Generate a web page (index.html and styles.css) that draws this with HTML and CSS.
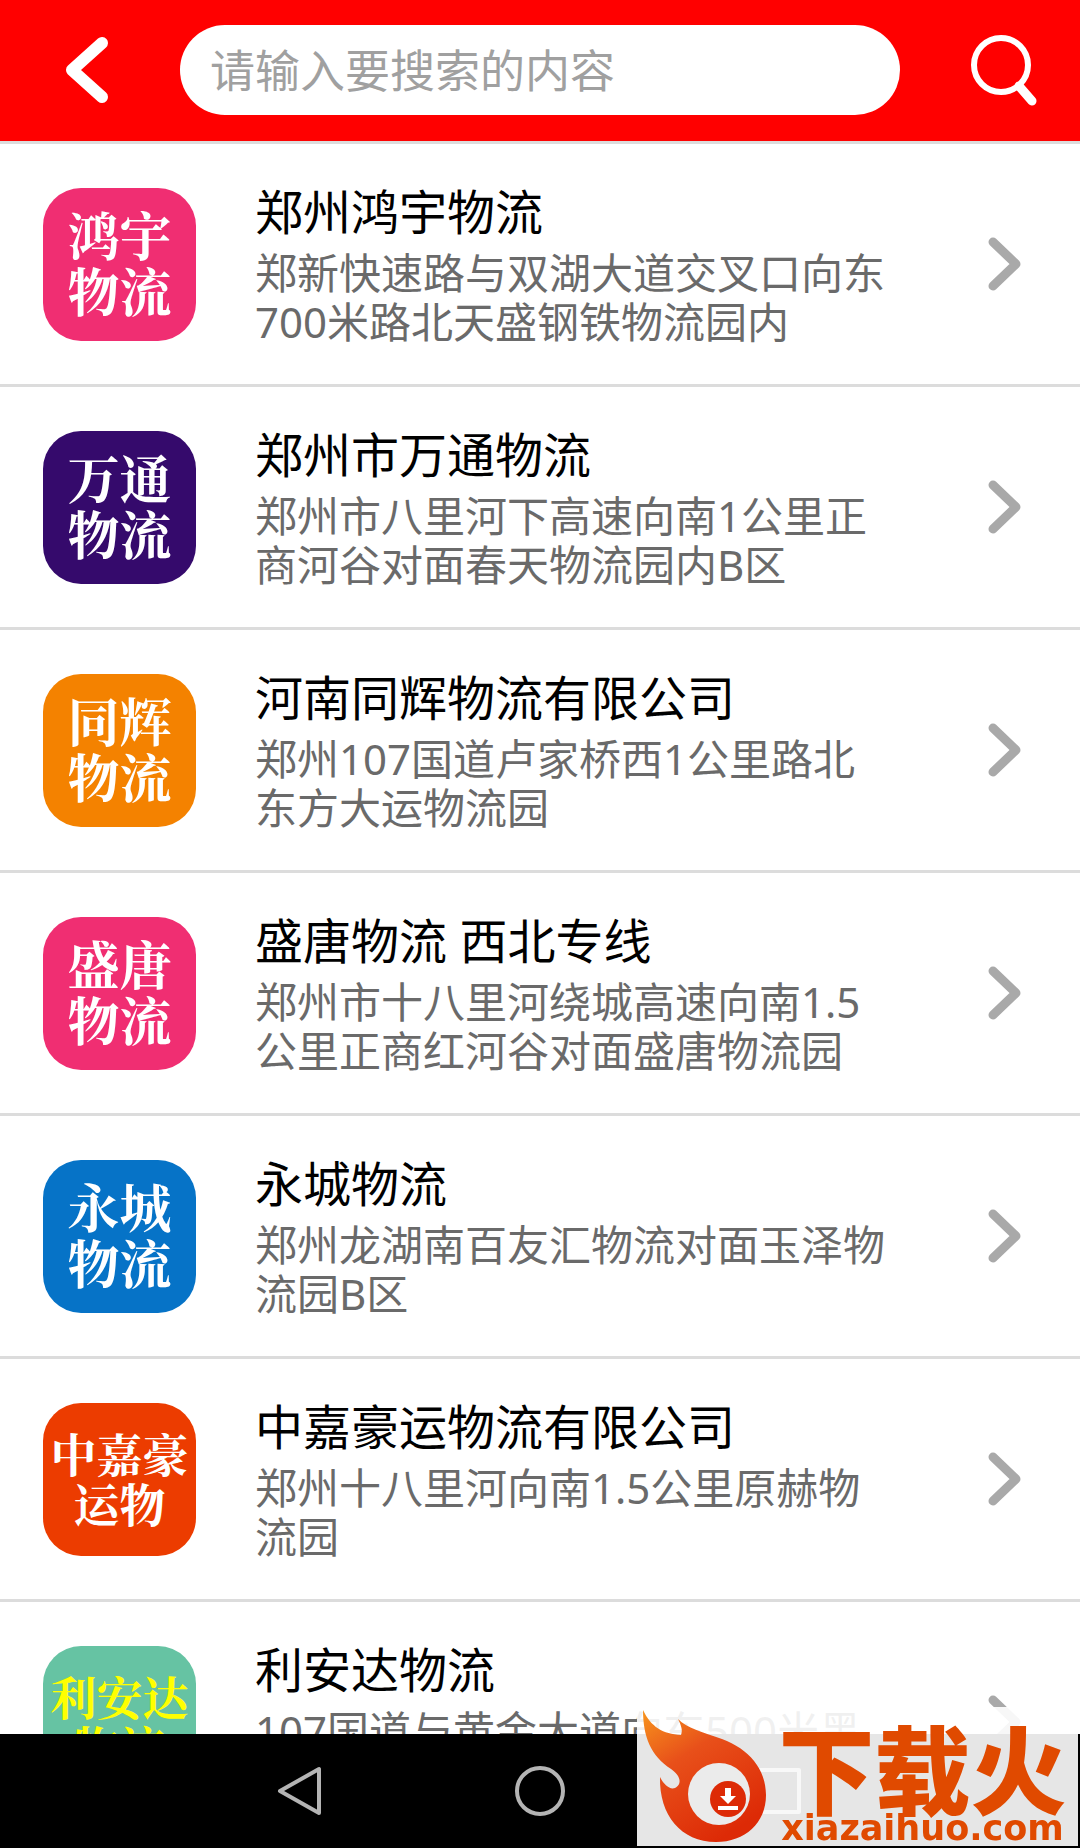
FILE: index.html
```html
<!DOCTYPE html>
<html lang="zh-CN">
<head>
    <meta charset="UTF-8">
    <meta name="viewport" content="width=device-width, initial-scale=1.0">
    <title>物流搜索</title>
    <link rel="stylesheet" href="styles.css">
</head>
<body>
    <form class="header">
        <button type="button" class="back-btn" aria-label="返回">
            <svg width="44" height="68" viewBox="0 0 44 68"><path d="M37 7 L7 34 L37 61"/></svg>
        </button>
        <input type="text" class="search-input" name="keyword" placeholder="请输入要搜索的内容" aria-label="搜索">
        <button type="submit" class="search-btn" aria-label="搜索">
            <svg width="68" height="74" viewBox="0 0 68 74"><circle cx="32" cy="32" r="27"/><path class="handle" d="M50 53 L63 68"/></svg>
        </button>
    </form>

    <main class="list">
        <a href="#" class="item">
            <span class="logo pink">鸿宇<br>物流</span>
            <div class="info">
                <h2>郑州鸿宇物流</h2>
                <p>郑新快速路与双湖大道交叉口向东700米路北天盛钢铁物流园内</p>
            </div>
            <svg class="arrow" width="34" height="54" viewBox="0 0 34 54"><path d="M5 5 L28 27 L5 49"/></svg>
        </a>
        <a href="#" class="item">
            <span class="logo purple">万通<br>物流</span>
            <div class="info">
                <h2>郑州市万通物流</h2>
                <p>郑州市八里河下高速向南1公里正商河谷对面春天物流园内B区</p>
            </div>
            <svg class="arrow" width="34" height="54" viewBox="0 0 34 54"><path d="M5 5 L28 27 L5 49"/></svg>
        </a>
        <a href="#" class="item">
            <span class="logo orange">同辉<br>物流</span>
            <div class="info">
                <h2>河南同辉物流有限公司</h2>
                <p>郑州107国道卢家桥西1公里路北东方大运物流园</p>
            </div>
            <svg class="arrow" width="34" height="54" viewBox="0 0 34 54"><path d="M5 5 L28 27 L5 49"/></svg>
        </a>
        <a href="#" class="item">
            <span class="logo pink">盛唐<br>物流</span>
            <div class="info">
                <h2>盛唐物流 西北专线</h2>
                <p>郑州市十八里河绕城高速向南1.5公里正商红河谷对面盛唐物流园</p>
            </div>
            <svg class="arrow" width="34" height="54" viewBox="0 0 34 54"><path d="M5 5 L28 27 L5 49"/></svg>
        </a>
        <a href="#" class="item">
            <span class="logo blue">永城<br>物流</span>
            <div class="info">
                <h2>永城物流</h2>
                <p>郑州龙湖南百友汇物流对面玉泽物流园B区</p>
            </div>
            <svg class="arrow" width="34" height="54" viewBox="0 0 34 54"><path d="M5 5 L28 27 L5 49"/></svg>
        </a>
        <a href="#" class="item">
            <span class="logo small red">中嘉豪<br>运物</span>
            <div class="info">
                <h2>中嘉豪运物流有限公司</h2>
                <p>郑州十八里河向南1.5公里原赫物流园</p>
            </div>
            <svg class="arrow" width="34" height="54" viewBox="0 0 34 54"><path d="M5 5 L28 27 L5 49"/></svg>
        </a>
        <a href="#" class="item">
            <span class="logo small green">利安达<br>物流</span>
            <div class="info">
                <h2>利安达物流</h2>
                <p>107国道与黄金大道向东500米黑<br>&nbsp;</p>
            </div>
            <svg class="arrow" width="34" height="54" viewBox="0 0 34 54"><path d="M5 5 L28 27 L5 49"/></svg>
        </a>
    </main>

    <nav class="nav">
        <button type="button" aria-label="后退">
            <svg width="52" height="52" viewBox="0 0 52 52"><path d="M45 4 V48 L6 26 Z"/></svg>
        </button>
        <button type="button" aria-label="主页">
            <svg width="52" height="52" viewBox="0 0 52 52"><circle cx="26" cy="26" r="23"/></svg>
        </button>
        <button type="button" aria-label="最近任务">
            <svg width="52" height="52" viewBox="0 0 52 52"><rect x="5" y="5" width="40" height="42"/></svg>
        </button>
    </nav>

    <div class="watermark">
        <svg width="130" height="136" viewBox="0 0 130 136">
            <defs>
                <linearGradient id="fire" x1="0" y1="0" x2="0.6" y2="1">
                    <stop offset="0" stop-color="#f7941d"/>
                    <stop offset="0.4" stop-color="#e8501a"/>
                    <stop offset="1" stop-color="#dd2a06"/>
                </linearGradient>
            </defs>
            <path fill="url(#fire)" d="M6 3 C14 20 26 27 44 28 C46 23 44 18 41 12 C50 21 65 25 85 32 C112 42 129 62 129 88 C129 116 108 135 79 135 C44 135 22 108 23 70 C27 78 33 83 38 81 C46 77 43 68 34 62 C14 49 6 30 6 3 Z"/>
            <circle cx="82" cy="87" r="31" fill="#ebebeb"/>
            <circle cx="91" cy="92" r="18" fill="#dd2a06"/>
            <path fill="#fff" d="M88 81 h6 v8 h5 l-8 8 l-8 -8 h5 Z M81 99 h20 v4 h-20 Z"/>
        </svg>
        <div class="brand">
            <strong>下载火</strong>
            <span>xiazaihuo.com</span>
        </div>
    </div>
</body>
</html>
```
FILE: styles.css
```css
* {
    box-sizing: border-box;
}

body {
    display: flex;
    flex-direction: column;
    height: 100vh;
    margin: 0;
    overflow: hidden;
    background-color: #fff;
    font-family: "Noto Sans", "Noto Sans CJK SC", sans-serif;
}

button {
    display: flex;
    align-items: center;
    justify-content: center;
    padding: 0;
    border: none;
    background: none;
    cursor: pointer;
}

svg {
    display: block;
    flex-shrink: 0;
    fill: none;
    stroke-linecap: round;
    stroke-linejoin: round;
}

/* search bar */
.header {
    display: flex;
    flex-shrink: 0;
    align-items: center;
    padding: 25px 0 26px;
    background-color: #ff0000;
    border-bottom: 3px solid #dcdcdc;
}

.back-btn,
.search-btn {
    flex-shrink: 0;
    width: 180px;
    height: 90px;
    stroke: #fff;
}

.back-btn {
    padding-right: 6px;
    stroke-width: 12px;
}

.search-btn {
    padding-left: 26px;
    stroke-width: 6px;
}

.handle {
    stroke-width: 9px;
}

.search-input {
    flex: 1;
    min-width: 0;
    height: 90px;
    padding: 0 30px;
    border: none;
    border-radius: 45px;
    background-color: #fff;
    font-family: inherit;
    font-size: 45px;
    color: #333;
}

.search-input::placeholder {
    color: #a0a0a0;
}

/* company list */
.list {
    flex: 1;
    min-height: 0;
    overflow: hidden;
}

.item {
    display: flex;
    align-items: center;
    padding: 38px 58px 38px 43px;
    border-bottom: 3px solid #dcdcdc;
    color: #000;
    text-decoration: none;
}

.logo {
    display: flex;
    flex-shrink: 0;
    align-items: center;
    justify-content: center;
    width: 153px;
    height: 153px;
    padding-bottom: 4px;
    border-radius: 38px;
    color: #fff;
    font-family: "Noto Serif CJK SC", "Noto Sans CJK SC", serif;
    font-size: 52px;
    font-weight: bold;
    line-height: 56px;
    text-align: center;
}

.logo.small {
    font-size: 46px;
    line-height: 50px;
}

.pink {
    background-color: #f02e72;
}

.purple {
    background-color: #350a6c;
}

.orange {
    background-color: #f48200;
}

.blue {
    background-color: #0673c7;
}

.red {
    background-color: #ec3c00;
}

.green {
    background-color: #66c3a3;
    color: #ffff00;
}

.info {
    flex: 1;
    margin: 0 100px 0 59px;
}

.info h2 {
    margin: 0 0 6px;
    font-size: 48px;
    font-weight: normal;
    line-height: 60px;
}

.info p {
    margin: 0;
    color: #6a6a6a;
    font-size: 42px;
    line-height: 49px;
}

.arrow {
    stroke: #a9a9a9;
    stroke-width: 9px;
}

/* system keys */
.nav {
    display: flex;
    flex-shrink: 0;
    align-items: center;
    justify-content: center;
    gap: 188px;
    height: 114px;
    background-color: #000;
    stroke: #b4b4b4;
    stroke-width: 4px;
}

/* site watermark over the corner */
.watermark {
    position: fixed;
    right: 2px;
    bottom: 2px;
    display: flex;
    width: 441px;
    height: 139px;
    background-color: rgba(255, 255, 255, 0.9);
}

.brand {
    display: flex;
    flex: 1;
    flex-direction: column;
    align-items: center;
    justify-content: flex-end;
    color: #e04a00;
}

.brand strong {
    font-size: 96px;
    font-weight: 900;
    line-height: 80px;
}

.brand span {
    font-family: "DejaVu Sans", sans-serif;
    font-size: 35px;
    font-weight: bold;
    line-height: 36px;
}
```
